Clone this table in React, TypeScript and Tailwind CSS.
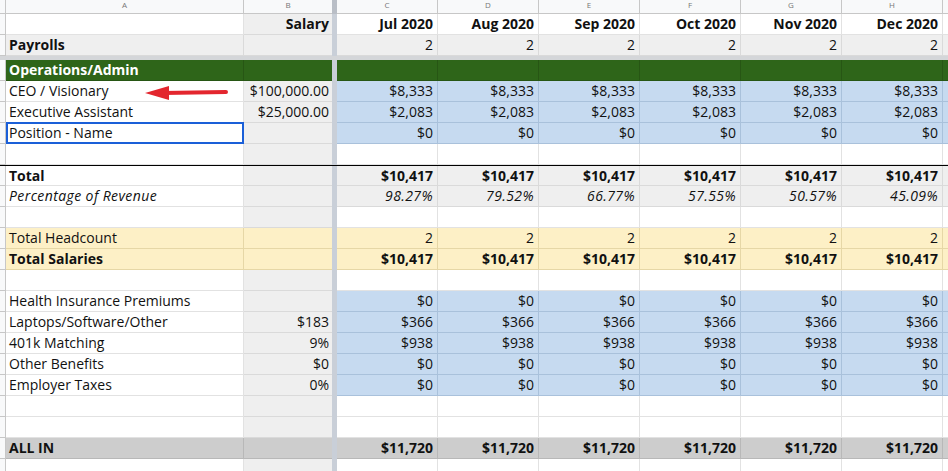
import React from 'react';

type Tone = 'white' | 'gray' | 'blue' | 'yellow' | 'green' | 'dark';

type Row = {
  a?: string;
  b?: string;
  m?: string[];
  bold?: boolean;
  italic?: boolean;
  boldA?: boolean;
  a_bg: Tone;
  b_bg: Tone;
  m_bg: Tone;
  topLine?: boolean;
  selected?: boolean;
};

const months = ['Jul 2020', 'Aug 2020', 'Sep 2020', 'Oct 2020', 'Nov 2020', 'Dec 2020'];
const six = (v: string) => Array(6).fill(v);

const bg: Record<Tone, string> = {
  white: 'bg-white border-[#e2e2e2]',
  gray: 'bg-[#efefef] border-[#dadada]',
  blue: 'bg-[#c6daf0] border-[#a9c1db]',
  yellow: 'bg-[#fdf0c6] border-[#e6d7a6]',
  green: 'bg-[#2e6519] border-[#275614]',
  dark: 'bg-[#cdcdcd] border-[#b8b8b8]',
};

// top section (above frozen row)
const headRows: Row[] = [
  { b: 'Salary', m: months, bold: true, a_bg: 'white', b_bg: 'gray', m_bg: 'white' },
  { a: 'Payrolls', m: six('2'), boldA: true, a_bg: 'gray', b_bg: 'gray', m_bg: 'gray' },
];

const bodyRows: Row[] = [
  { a: 'Operations/Admin', bold: true, a_bg: 'green', b_bg: 'green', m_bg: 'green' },
  { a: 'CEO / Visionary', b: '$100,000.00', m: six('$8,333'), a_bg: 'white', b_bg: 'gray', m_bg: 'blue' },
  { a: 'Executive Assistant', b: '$25,000.00', m: six('$2,083'), a_bg: 'white', b_bg: 'gray', m_bg: 'blue' },
  { a: 'Position - Name', m: six('$0'), a_bg: 'white', b_bg: 'gray', m_bg: 'blue', selected: true },
  { a_bg: 'white', b_bg: 'gray', m_bg: 'white' },
  { a: 'Total', m: six('$10,417'), bold: true, a_bg: 'white', b_bg: 'gray', m_bg: 'gray', topLine: true },
  {
    a: 'Percentage of Revenue',
    m: ['98.27%', '79.52%', '66.77%', '57.55%', '50.57%', '45.09%'],
    italic: true,
    a_bg: 'white',
    b_bg: 'gray',
    m_bg: 'gray',
  },
  { a_bg: 'white', b_bg: 'gray', m_bg: 'white' },
  { a: 'Total Headcount', m: six('2'), a_bg: 'yellow', b_bg: 'yellow', m_bg: 'yellow' },
  { a: 'Total Salaries', m: six('$10,417'), bold: true, a_bg: 'yellow', b_bg: 'yellow', m_bg: 'yellow' },
  { a_bg: 'white', b_bg: 'gray', m_bg: 'white' },
  { a: 'Health Insurance Premiums', m: six('$0'), a_bg: 'white', b_bg: 'gray', m_bg: 'blue' },
  { a: 'Laptops/Software/Other', b: '$183', m: six('$366'), a_bg: 'white', b_bg: 'gray', m_bg: 'blue' },
  { a: '401k Matching', b: '9%', m: six('$938'), a_bg: 'white', b_bg: 'gray', m_bg: 'blue' },
  { a: 'Other Benefits', b: '$0', m: six('$0'), a_bg: 'white', b_bg: 'gray', m_bg: 'blue' },
  { a: 'Employer Taxes', b: '0%', m: six('$0'), a_bg: 'white', b_bg: 'gray', m_bg: 'blue' },
  { a_bg: 'white', b_bg: 'gray', m_bg: 'white' },
  { a_bg: 'white', b_bg: 'gray', m_bg: 'white' },
  { a: 'ALL IN', m: six('$11,720'), bold: true, a_bg: 'dark', b_bg: 'dark', m_bg: 'dark' },
  { a_bg: 'white', b_bg: 'gray', m_bg: 'white' },
];

const SheetRow: React.FC<{ row: Row }> = ({ row }) => {
  const weight = row.bold ? 'font-bold' : '';
  const slant = row.italic ? 'italic tracking-[0.4px]' : '';
  const textA = row.a_bg === 'green' ? 'text-white' : 'text-[#111]';
  const top = row.topLine ? 'border-t border-t-black' : '';
  return (
    <div className={`flex h-[21px] ${top}`}>
      <div className="w-[6px] shrink-0 bg-[#f8f9fa] border-r border-b border-[#c7c7c7]" />
      <div
        className={`relative w-[238px] shrink-0 border-r border-b px-[3px] leading-[20px] ${bg[row.a_bg]} ${textA} ${
          row.bold || row.boldA ? 'font-bold' : ''
        } ${slant}`}
      >
        {row.a}
        {row.selected && (
          <div className="absolute left-0 top-[-1px] w-[238px] h-[22px] border-2 border-[#1a5fd8]" />
        )}
      </div>
      <div className={`w-[88px] shrink-0 border-b px-[3px] text-right leading-[20px] ${bg[row.b_bg]} ${weight} ${slant}`}>
        {row.b}
      </div>
      <div className="w-[5px] shrink-0 bg-[#c9cfd8]" />
      {Array.from({ length: 6 }).map((_, i) => (
        <div
          key={i}
          className={`w-[101px] shrink-0 border-r border-b px-[4px] text-right leading-[20px] ${bg[row.m_bg]} ${weight} ${slant}`}
        >
          {row.m?.[i]}
        </div>
      ))}
      <div className={`flex-1 border-b ${bg[row.m_bg]}`} />
    </div>
  );
};

const letters = ['C', 'D', 'E', 'F', 'G', 'H'];

const App: React.FC = () => {
  return (
    <div
      className="w-[948px] h-[471px] overflow-hidden bg-white text-[14px] text-[#111]"
      style={{ fontFamily: '"Open Sans", "Noto Sans", sans-serif' }}
    >
      {/* column letters */}
      <div className="flex h-[14px] bg-[#f8f9fa] text-[8px] text-[#777] leading-[10px]">
        <div className="w-[6px] shrink-0 border-r border-b border-[#c7c7c7]" />
        <div className="w-[238px] shrink-0 border-r border-b border-[#c7c7c7] text-center">A</div>
        <div className="w-[88px] shrink-0 border-b border-[#c7c7c7] text-center">B</div>
        <div className="w-[5px] shrink-0 bg-[#b9bec6]" />
        {letters.map((l) => (
          <div key={l} className="w-[101px] shrink-0 border-r border-b border-[#c7c7c7] text-center">
            {l}
          </div>
        ))}
        <div className="flex-1 border-b border-[#c7c7c7]" />
      </div>

      {headRows.map((r, i) => (
        <SheetRow key={`h${i}`} row={r} />
      ))}

      {/* frozen row divider */}
      <div className="h-[4px] bg-[#d4d6d9]" />

      <div className="relative">
        {bodyRows.map((r, i) => (
          <SheetRow key={i} row={r} />
        ))}

        {/* red arrow pointing at CEO row */}
        <svg className="absolute left-[143px] top-[25px]" width="86" height="16" viewBox="0 0 86 16">
          <line x1="20" y1="8" x2="83" y2="7" stroke="#e3262e" strokeWidth="4" strokeLinecap="round" />
          <polygon points="2,8 26,1 26,15" fill="#e3262e" />
        </svg>
      </div>
    </div>
  );
};

export default App;
